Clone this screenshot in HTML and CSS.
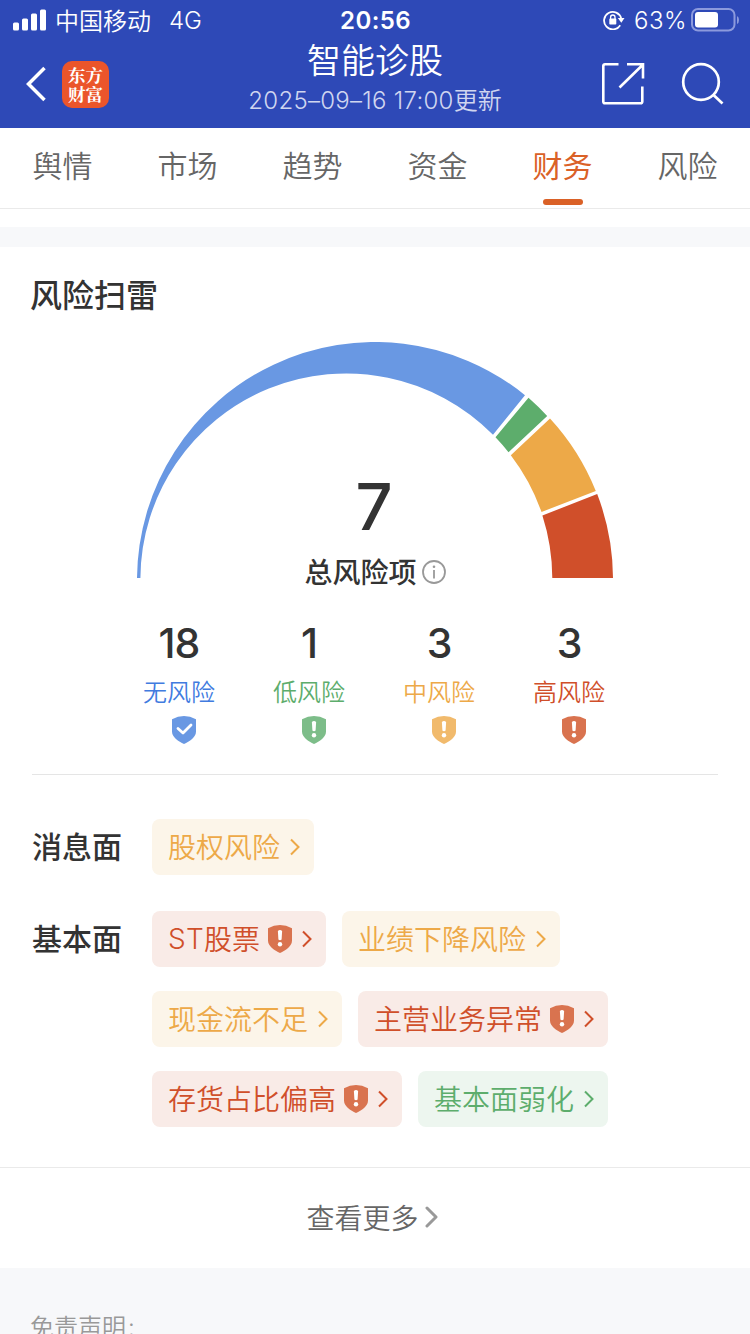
FILE: index.html
```html
<!DOCTYPE html>
<html lang="zh-CN">
<head>
<meta charset="utf-8">
<title>智能诊股</title>
<link rel="stylesheet" href="styles.css">
</head>
<body>
<svg class="defs" width="0" height="0">
  <symbol id="shield" viewBox="0 0 24 28"><path d="M0 3.200Q6 0 12 0T24 3.200V15.500C24 21.500 17.500 25.200 12 28C6.500 25.200 0 21.500 0 15.500Z" fill="currentColor"/></symbol>
  <symbol id="warn" viewBox="0 0 24 28"><use href="#shield"/><path d="M9.900 6Q12 4.200 14.100 6L13.600 14.600Q12 16 10.400 14.600Z" fill="#fff"/><circle cx="12" cy="19.200" r="2.200" fill="#fff"/></symbol>
  <symbol id="arrow" viewBox="0 0 10 18"><path d="M1 1.500L8.500 9L1 16.500" fill="none" stroke="currentColor" stroke-width="2"/></symbol>
</svg>
<header class="header">
  <div class="status">
    <svg class="signal" width="34" height="22" viewBox="0 0 34 22" fill="#fff"><rect x="0" y="13.500" width="6" height="8" rx="1.500"/><rect x="9" y="9.500" width="6" height="12" rx="1.500"/><rect x="18" y="4.500" width="6" height="17" rx="1.500"/><rect x="27" y="0.500" width="6" height="21" rx="1.500"/></svg>
    <span class="carrier">中国移动</span>
    <span class="network">4G</span>
    <span class="clock">20:56</span>
    <div class="power">
      <svg width="22" height="20" viewBox="0 0 22 20"><path d="M17.200 15.200A8.700 8.700 0 1 1 18.200 8.500" fill="none" stroke="#fff" stroke-width="1.800"/><path d="M14.800 8H21.500L18.300 12.800Z" fill="#fff"/><rect x="6.300" y="8.600" width="7" height="6" rx=".8" fill="#fff"/><path d="M7.600 9V7.200a2.200 2.200 0 0 1 4.400 0V9" fill="none" stroke="#fff" stroke-width="1.300"/></svg>
      <span class="percent">63%</span>
      <svg class="battery" width="49" height="24" viewBox="0 0 49 24"><rect x="1" y="1" width="42.500" height="21.500" rx="6" fill="none" stroke="#8c9add" stroke-width="2"/><rect x="4" y="4" width="23" height="15.500" rx="3" fill="#fff"/><path d="M46 8Q48 9 48 12T46 16Z" fill="#8c9add"/></svg>
    </div>
  </div>
  <nav class="nav">
    <div class="nav-side">
      <svg width="20" height="36" viewBox="0 0 20 36"><path d="M18.500 2L2.500 18L18.500 34" fill="none" stroke="#fff" stroke-width="3.500"/></svg>
      <div class="logo">东方<br>财富</div>
    </div>
    <div class="heading"><h1>智能诊股</h1><p><span class="date">2025–09–16 17:00</span>更新</p></div>
    <div class="nav-actions">
      <svg width="44" height="44" viewBox="0 0 44 44" fill="none" stroke="#fff" stroke-width="2.600"><path d="M17.500 2.300H4Q2.300 2.300 2.300 4V39.500Q2.300 41.300 4 41.300H39.500Q41.300 41.300 41.300 39.500V24.500M26 2.300H42.300M42 1V16.500M41 3.500L18.500 25.500"/></svg>
      <svg width="44" height="44" viewBox="0 0 44 44" fill="none" stroke="#fff" stroke-width="2.700"><circle cx="20" cy="20" r="17.800"/><path d="M32.500 33L41.500 41.500"/></svg>
    </div>
  </nav>
</header>
<div class="tabs">
  <span class="tab">舆情</span><span class="tab">市场</span><span class="tab">趋势</span><span class="tab">资金</span><span class="tab active">财务</span><span class="tab">风险</span>
</div>
<div class="band"></div>
<main class="card">
  <h2>风险扫雷</h2>
  <div class="gauge">
    <svg width="476" height="236" viewBox="137 342 476 236">
      <path fill="#6998e3" d="M137 578A238 238 0 0 1 525 395.200L493 434.700A206 206 0 0 0 140.400 578Z"/>
      <path fill="#5dad6c" d="M528.500 397.700A238 238 0 0 1 547.200 416L508.500 452.200A206 206 0 0 0 495.500 437.200Z"/>
      <path fill="#eda948" d="M550 418.500A238 238 0 0 1 595.800 491L541.500 512A206 206 0 0 0 510.800 455.200Z"/>
      <path fill="#d04f2a" d="M597.200 494A238 238 0 0 1 613 578H552.300A206 206 0 0 0 542.400 515.500Z"/>
    </svg>
    <div class="total">
      <div class="total-number">7</div>
      <div class="total-label">总风险项<svg width="24" height="24" viewBox="0 0 24 24" fill="none" stroke="#999" stroke-width="1.800"><circle cx="12" cy="12" r="11"/><path d="M12 10V18.500"/><circle cx="12" cy="6.800" r="1.300" fill="#999" stroke="none"/></svg></div>
    </div>
  </div>
  <div class="counts">
    <div class="count none"><b>18</b><span>无风险</span><svg width="24" height="28" viewBox="0 0 24 28"><use href="#shield"/><path d="M6 12.500L11 17L19 9" fill="none" stroke="#fff" stroke-width="2.800" stroke-linecap="round" stroke-linejoin="round"/></svg></div>
    <div class="count low"><b>1</b><span>低风险</span><svg width="24" height="28"><use href="#warn"/></svg></div>
    <div class="count mid"><b>3</b><span>中风险</span><svg width="24" height="28"><use href="#warn"/></svg></div>
    <div class="count high"><b>3</b><span>高风险</span><svg width="24" height="28"><use href="#warn"/></svg></div>
  </div>
  <section class="group">
    <h3>消息面</h3>
    <div class="tags"><div class="tag mid">股权风险<svg class="arrow"><use href="#arrow"/></svg></div></div>
  </section>
  <section class="group">
    <h3>基本面</h3>
    <div class="tags">
      <div class="tag high"><span class="latin">ST</span>股票<svg class="badge"><use href="#warn"/></svg><svg class="arrow"><use href="#arrow"/></svg></div>
      <div class="tag mid">业绩下降风险<svg class="arrow"><use href="#arrow"/></svg></div>
      <div class="tag mid">现金流不足<svg class="arrow"><use href="#arrow"/></svg></div>
      <div class="tag high">主营业务异常<svg class="badge"><use href="#warn"/></svg><svg class="arrow"><use href="#arrow"/></svg></div>
      <div class="tag high">存货占比偏高<svg class="badge"><use href="#warn"/></svg><svg class="arrow"><use href="#arrow"/></svg></div>
      <div class="tag low">基本面弱化<svg class="arrow"><use href="#arrow"/></svg></div>
    </div>
  </section>
</main>
<div class="more">查看更多<svg width="14" height="22" viewBox="0 0 14 22"><path d="M2 2L11 11L2 20" fill="none" stroke="#999" stroke-width="3" stroke-linecap="round" stroke-linejoin="round"/></svg></div>
<footer class="footer">免责声明<span class="colon">:</span></footer>
</body>
</html>
```
FILE: styles.css
```css
* { box-sizing: border-box; margin: 0; padding: 0; }
html { overflow: hidden; }
body {
  width: 750px; height: 1334px; overflow: hidden;
  display: flex; flex-direction: column;
  background: #fff; color: #333;
  font-family: "Noto Sans CJK SC", sans-serif; font-weight: 350;
}
svg { display: block; flex: none; }
.defs { display: none; }
.header { height: 128px; flex: none; background: #2e49b7; color: #fff; }
.status { height: 40px; display: flex; align-items: center; padding-left: 13px; position: relative; }
.carrier { font-size: 24px; line-height: 40px; margin-left: 8px; }
.network, .clock, .percent, .date, .latin { font-family: Inter, sans-serif; }
.network { font-size: 24px; margin-left: 18px; line-height: 40px; padding-top: 2px; }
.clock { position: absolute; left: 1px; right: 0; top: 1px; text-align: center; font-size: 24px; font-weight: 600; letter-spacing: .4px; line-height: 40px; }
.power { margin-left: auto; display: flex; align-items: center; padding-right: 10px; }
.percent { font-size: 24px; letter-spacing: .5px; margin-left: 9px; line-height: 40px; padding-top: 2px; }
.battery { margin-left: 4px; }
.nav { height: 88px; display: grid; grid-template-columns: 200px 350px 200px; }
.nav-side { display: flex; align-items: center; padding: 0 0 0 26px; gap: 16px; }
.logo {
  width: 47px; height: 47px; border-radius: 10px; background: #eb552b;
  text-align: center; padding-top: 4px;
  font-family: "Noto Serif CJK SC", "Noto Sans CJK SC", sans-serif; font-weight: 700; font-size: 17.500px; line-height: 19.500px;
}
.heading { text-align: center; }
.heading h1 { font-size: 34px; font-weight: 350; line-height: 38px; }
.heading p { font-size: 24px; line-height: 41px; color: #d0d6f0; white-space: nowrap; }
.date { letter-spacing: .28px; }
.nav-actions { display: flex; align-items: center; gap: 36px; padding-left: 51px; }
.tabs { height: 81px; flex: none; display: grid; grid-template-columns: repeat(6, 1fr); border-bottom: 1px solid #eaeaea; }
.tab { font-size: 30px; line-height: 72px; text-align: center; color: #666; position: relative; }
.active { color: #da6127; font-weight: 400; }
.active::after { content: ""; position: absolute; left: 42.500px; top: 71px; width: 40px; height: 6px; border-radius: 3px; background: #da6127; }
.band { height: 20px; flex: none; margin-top: 18px; background: #f7f8fa; }
.card { height: 921px; flex: none; border-bottom: 1px solid #eaeaea; }
h2 { font-size: 32px; font-weight: 500; line-height: 92px; height: 95px; padding-left: 30px; }
.gauge { height: 236px; display: flex; justify-content: center; position: relative; }
.total { position: absolute; left: 0; right: 0; top: 125px; text-align: center; }
.total-number { font: 500 65px/80px Inter, sans-serif; position: relative; left: -1px; }
.total-label { display: flex; justify-content: center; align-items: center; gap: 5px; font-size: 28px; font-weight: 500; line-height: 44px; margin-top: 2px; }
.total-label svg { margin-top: 2px; }
.counts { height: 197px; margin: 0 32px; padding: 43px 82px 0; display: grid; grid-template-columns: repeat(4, 130px); border-bottom: 1px solid #e5e5e5; }
.count { display: flex; flex-direction: column; align-items: center; }
.count b { font: 500 41px/44px Inter, sans-serif; letter-spacing: -1px; color: #333; }
.count span { font-size: 24px; line-height: 36px; margin-top: 8px; }
.count svg { margin: 7px 0 0 10px; }
.none span { color: #417bdf; }
.none svg { color: #6998e3; }
.low { color: #5dad6c; }
.count.low svg { color: #7dbd89; }
.mid { color: #eda948; }
.count.mid svg { color: #f1ba6c; }
.high { color: #d04f2a; }
.badge, .high > svg:not(.arrow) { color: #d9734f; }
.group { display: flex; padding-left: 32px; margin-top: 36px; }
.counts + .group { margin-top: 44px; }
h3 { width: 120px; font-size: 30px; font-weight: 500; line-height: 53px; height: 56px; }
.tags { display: flex; flex-wrap: wrap; gap: 24px 16px; width: 520px; }
.tag { height: 56px; display: flex; align-items: flex-start; padding: 0 14px 0 16px; border-radius: 8px; font-size: 28px; line-height: 54px; }
.tag svg { align-self: center; }
.tag.mid { background: #fcf5e9; }
.tag.high { background: #f9ebe7; }
.tag.low { background: #edf6ef; }
.latin { padding-top: 1px; letter-spacing: .2px; }
.badge { width: 24px; height: 28px; margin-left: 8px; }
.arrow { width: 10px; height: 18px; margin-left: 10px; }
.more { height: 100px; flex: none; display: flex; justify-content: center; align-items: center; font-size: 28px; line-height: 40px; color: #666; gap: 6px; padding: 0 5px 2px 0; }
.footer { flex: 1; background: #f7f8fa; color: #999; font-size: 24px; line-height: 36px; padding: 40px 30px 0; }
.colon { font-family: Inter, sans-serif; margin-left: 2px; }
```
